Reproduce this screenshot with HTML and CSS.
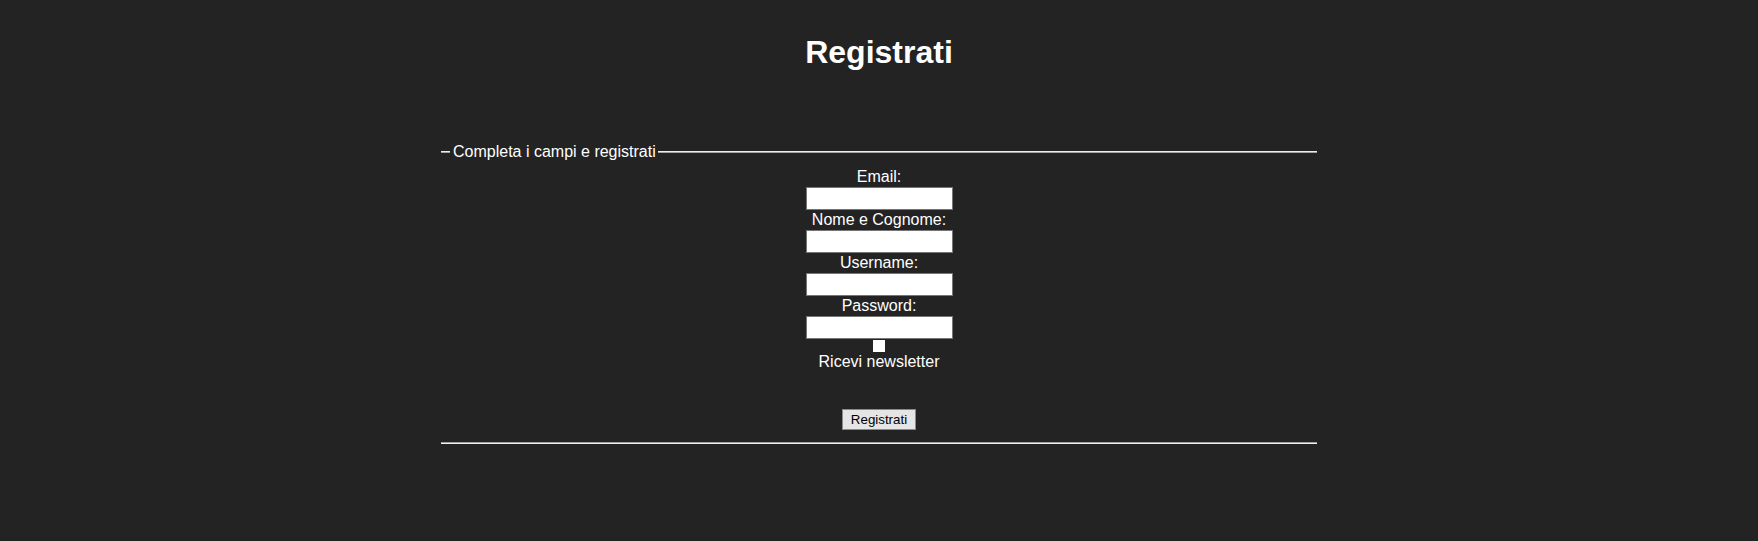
FILE: index.html
```html
<!DOCTYPE html>
<html lang="it">
<head>
<meta charset="utf-8">
<title>Registrati</title>
<link rel="stylesheet" href="styles.css">
</head>
<body>
  <header class="page-header">
    <h1 class="title">Registrati</h1>
  </header>
  <form class="signup">
    <fieldset class="panel">
      <legend class="panel-legend">
        <span class="rule rule-short"></span>
        <span class="legend-text">Completa i campi e registrati</span>
        <span class="rule rule-long"></span>
      </legend>
      <div class="fields">
        <label class="field-label" for="email">Email:</label>
        <input class="field-input" type="text" id="email" name="email">
        <label class="field-label" for="nome">Nome e Cognome:</label>
        <input class="field-input" type="text" id="nome" name="nome">
        <label class="field-label" for="username">Username:</label>
        <input class="field-input" type="text" id="username" name="username">
        <label class="field-label" for="password">Password:</label>
        <input class="field-input" type="password" id="password" name="password">
        <input class="check" type="checkbox" id="newsletter" name="newsletter">
        <label class="check-label" for="newsletter">Ricevi newsletter</label>
        <button class="submit" type="submit">Registrati</button>
      </div>
    </fieldset>
  </form>
</body>
</html>
```

FILE: styles.css
```css
html, body {
  margin: 0;
  padding: 0;
}

body {
  background: #232323;
  color: #ffffff;
  font-family: "Liberation Sans", Arial, sans-serif;
  font-size: 16px;
  min-height: 541px;
}

.page-header {
  padding-top: 34px;
  display: flex;
  justify-content: center;
}

.title {
  margin: 0;
  font-size: 32px;
  line-height: 37px;
  font-weight: bold;
  color: #ffffff;
}

.signup {
  display: flex;
  justify-content: center;
  margin-top: 72px;
}

.panel {
  width: 876px;
  box-sizing: border-box;
  margin: 0;
  padding: 0 0 13px;
  border: 0;
  border-bottom: 1px solid #f0f0f0;
  box-shadow: inset 0 -1px 0 #a0a0a0;
  min-width: 0;
}

.panel-legend {
  width: 100%;
  padding: 0;
  display: flex;
  align-items: center;
  height: 18px;
  line-height: 18px;
}

.rule {
  height: 2px;
  background: linear-gradient(#ececec 50%, #a3a3a3 50%);
}

.rule-short {
  width: 9px;
  flex: none;
}

.legend-text {
  padding: 0 2px 0 3px;
  color: #ffffff;
  white-space: nowrap;
}

.rule-long {
  flex: 1;
}

.fields {
  display: flex;
  flex-direction: column;
  align-items: center;
  padding-top: 6px;
}

.field-label {
  display: block;
  height: 20px;
  line-height: 20px;
  color: #ffffff;
}

.field-input {
  width: 147px;
  height: 23px;
  box-sizing: border-box;
  margin: 0;
  padding: 1px 2px;
  border: 1px solid #767676;
  background: #ffffff;
  font-family: "Liberation Sans", Arial, sans-serif;
  font-size: 13.333px;
}

.check {
  appearance: none;
  -webkit-appearance: none;
  width: 12px;
  height: 12px;
  margin: 1px 0 0 0;
  background: #ffffff;
  border: 0;
  border-radius: 0;
}

.check-label {
  display: block;
  height: 18px;
  line-height: 18px;
  margin-top: 1px;
  color: #ffffff;
}

.submit {
  margin-top: 38px;
  width: 74px;
  height: 21px;
  box-sizing: border-box;
  padding: 0 6px;
  border: 1px solid #8a8a8a;
  background: #e5e5e5;
  color: #000000;
  font-family: "Liberation Sans", Arial, sans-serif;
  font-size: 13.333px;
  line-height: 17px;
  border-radius: 0;
}
```
